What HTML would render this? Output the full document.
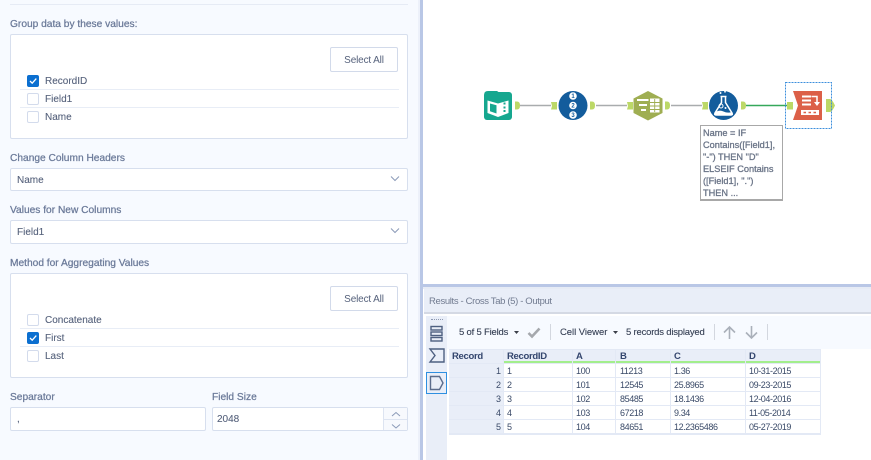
<!DOCTYPE html>
<html><head><meta charset="utf-8"><style>
html,body{margin:0;padding:0}
body{width:871px;height:460px;overflow:hidden;position:relative;background:#fff;font-family:"Liberation Sans",sans-serif}
.a{position:absolute}
.t{position:absolute;white-space:nowrap;line-height:14px;height:14px;margin-top:1px}
.lb{font-size:10.2px;color:#6b7a99;-webkit-text-stroke:.25px #6b7a99}
.tx{font-size:10px;color:#56627c;-webkit-text-stroke:.1px #56627c}
.box{position:absolute;box-sizing:border-box;background:#fff;border:1px solid #d7dfee;border-radius:2px}
.btn{position:absolute;box-sizing:border-box;background:#fff;border:1px solid #d2daea;border-radius:2px;width:68px;height:25px;font-size:10px;letter-spacing:-.15px;color:#56627c;text-align:center;line-height:25px}
.cb{position:absolute;box-sizing:border-box;width:12px;height:12px;border:1px solid #d3dbec;border-radius:2px;background:#fff}
.cb.on{background:#0b6fd0;border-color:#0b6fd0}
.dv{position:absolute;height:1px;background:#e8edf6}
.tb{font-size:9.5px;letter-spacing:-.2px;color:#333d52;-webkit-text-stroke:.1px #333d52}
.cell{position:absolute;box-sizing:border-box;height:13px;background:#fff;font:9px/15px "Liberation Sans",sans-serif;letter-spacing:-.4px;color:#3a4a68;padding-left:3px;white-space:nowrap;overflow:hidden}
.hd{position:absolute;box-sizing:border-box;height:13px;background:#e9eef8;font:bold 9.5px/14px "Liberation Sans",sans-serif;letter-spacing:-.3px;color:#34466e;padding-left:3px;border-bottom:2px solid #a3ee8c;overflow:hidden}
.rn{position:absolute;box-sizing:border-box;left:449px;width:54px;height:13px;background:#e9eef8;font:9px/15px "Liberation Sans",sans-serif;color:#3a4a68;text-align:right;padding-right:2px;overflow:hidden}
</style></head><body>

<!-- left panel -->
<div class="a" style="left:0;top:0;width:418px;height:460px;background:#f7faff"></div>
<div class="a" style="left:418px;top:0;width:2px;height:460px;background:#edf1fa"></div>
<div class="a" style="left:420px;top:0;width:3px;height:460px;background:#b9c7e6"></div>
<div class="a" style="left:10px;top:4px;width:398px;height:1px;background:#e6ebf5"></div>

<div class="t lb" style="left:10px;top:17px">Group data by these values:</div>
<div class="box" style="left:10px;top:34px;width:398px;height:105px"></div>
<div class="btn" style="left:330px;top:47px">Select All</div>
<div class="cb on" style="left:27px;top:75px"><svg width="10" height="10" style="display:block"><path d="M2 5l2.200 2.200L8.300 2.600" fill="none" stroke="#fff" stroke-width="1.300"/></svg></div>
<div class="t tx" style="left:45px;top:74px">RecordID</div>
<div class="dv" style="left:20px;top:89px;width:379px"></div>
<div class="cb" style="left:27px;top:93px"></div>
<div class="t tx" style="left:45px;top:92px">Field1</div>
<div class="dv" style="left:20px;top:107px;width:379px"></div>
<div class="cb" style="left:27px;top:111px"></div>
<div class="t tx" style="left:45px;top:110px">Name</div>

<div class="t lb" style="left:10px;top:151px">Change Column Headers</div>
<div class="box" style="left:10px;top:168px;width:398px;height:23px"></div>
<div class="t tx" style="left:17px;top:173px">Name</div>
<svg class="a" style="left:390px;top:175px" width="10" height="8"><path d="M1 1.500l4 4 4-4" fill="none" stroke="#8b9ab8" stroke-width="1"/></svg>

<div class="t lb" style="left:10px;top:203px">Values for New Columns</div>
<div class="box" style="left:10px;top:220px;width:398px;height:24px"></div>
<div class="t tx" style="left:17px;top:225px">Field1</div>
<svg class="a" style="left:390px;top:227px" width="10" height="8"><path d="M1 1.500l4 4 4-4" fill="none" stroke="#8b9ab8" stroke-width="1"/></svg>

<div class="t lb" style="left:10px;top:256px">Method for Aggregating Values</div>
<div class="box" style="left:10px;top:273px;width:398px;height:105px"></div>
<div class="btn" style="left:330px;top:286px">Select All</div>
<div class="cb" style="left:27px;top:314px"></div>
<div class="t tx" style="left:45px;top:313px">Concatenate</div>
<div class="dv" style="left:20px;top:328px;width:379px"></div>
<div class="cb on" style="left:27px;top:332px"><svg width="10" height="10" style="display:block"><path d="M2 5l2.200 2.200L8.300 2.600" fill="none" stroke="#fff" stroke-width="1.300"/></svg></div>
<div class="t tx" style="left:45px;top:331px">First</div>
<div class="dv" style="left:20px;top:346px;width:379px"></div>
<div class="cb" style="left:27px;top:350px"></div>
<div class="t tx" style="left:45px;top:349px">Last</div>

<div class="t lb" style="left:10px;top:390px">Separator</div>
<div class="t lb" style="left:212px;top:390px">Field Size</div>
<div class="box" style="left:10px;top:407px;width:196px;height:24px"></div>
<div class="t tx" style="left:17px;top:412px">,</div>
<div class="box" style="left:212px;top:407px;width:196px;height:24px"></div>
<div class="t tx" style="left:217px;top:412px">2048</div>
<div class="a" style="left:383px;top:408px;width:24px;height:22px;box-sizing:border-box;background:#f7f9fd;border-left:1px solid #dde4f1"></div>
<div class="a" style="left:383px;top:419px;width:24px;height:1px;background:#dde4f1"></div>
<svg class="a" style="left:391px;top:411px" width="10" height="7"><path d="M1 5l4-3.500L9 5" fill="none" stroke="#8b9ab8" stroke-width="1"/></svg>
<svg class="a" style="left:391px;top:423px" width="10" height="7"><path d="M1 1.500L5 5l4-3.500" fill="none" stroke="#8b9ab8" stroke-width="1"/></svg>

<!-- workflow canvas -->
<svg class="a" style="left:424px;top:60px" width="447" height="160">
  <!-- connectors -->
  <path d="M96 45.500H127" stroke="#a9acae" stroke-width="1.400"/>
  <path d="M172 45.500H203" stroke="#a9acae" stroke-width="1.400"/>
  <path d="M247 45.500H278" stroke="#a9acae" stroke-width="1.400"/>
  <path d="M322 45.500H363" stroke="#35a85a" stroke-width="1.600"/>
  <!-- anchors -->
  <g fill="#bcd867">
    <path d="M91 41.500h2q3 0 3 4t-3 4h-2z"/>
    <path d="M127 42h6v7.500h-6l1-3.500z"/>
    <path d="M166 41.500h2q3 0 3 4t-3 4h-2z"/>
    <path d="M203 42h6v7.500h-6l1-3.500z"/>
    <path d="M241 41.500h2q3 0 3 4t-3 4h-2z"/>
    <path d="M278 42h6v7.500h-6l1-3.500z"/>
    <path d="M317 41.500h2q3 0 3 4t-3 4h-2z"/>
    <path d="M363 42h6v7.500h-6z"/>
    <path d="M402 39h4q2 0 5 6.500q-3 6.500-5 6.500h-4z"/>
  </g>
  <!-- input tool -->
  <rect x="60" y="32" width="28" height="28" rx="3" fill="#16a78f"/>
  <path d="M60 35q0-4 4-4h9l3 2h-16z" fill="#16a78f"/>
  <path d="M63.500 40.500v12.500l10.500 4 10.500-4V40.500l-10.500 3z" fill="#fff"/>
  <path d="M66 43.500l6.500 1.800v8.200L66 51.200z" fill="#16a78f"/>
  <path d="M79.500 42.500h2v2h-2zM79.500 46.500h2v2h-2zM79.500 50h2v2h-2z" fill="#16a78f"/>
  <!-- record id tool -->
  <circle cx="149" cy="45.500" r="14.500" fill="#135c9c"/>
  <circle cx="149" cy="36" r="3.800" fill="#fff"/><circle cx="149" cy="45.500" r="3.800" fill="#fff"/><circle cx="149" cy="55" r="3.800" fill="#fff"/>
  <g font-family="Liberation Sans,sans-serif" font-size="6" font-weight="bold" fill="#135c9c" text-anchor="middle">
    <text x="149" y="38.200">1</text><text x="149" y="47.700">2</text><text x="149" y="57.200">3</text>
  </g>
  <!-- text to columns hex -->
  <path d="M224 31l14.500 7.500v14.500L224 60.500 209.500 53V38.500z" fill="#9fae52"/>
  <path d="M213 39h11.500v2H213zM215 44h8v2h-8zM217 49h5v2h-5z" fill="#fff"/>
  <rect x="226" y="38.500" width="9.500" height="14" fill="#fff"/>
  <path d="M226 42.500h9.500M226 46h9.500M226 49.500h9.500M230.700 39v13" stroke="#9fae52" stroke-width=".9"/>
  <!-- formula -->
  <circle cx="299.500" cy="45.500" r="14.500" fill="#135c9c"/>
  <path d="M296.500 36.500h6M297.500 37v5.500l-6.500 10.500q-1 2 1.500 2h14q2.500 0 1.500-2l-6.500-10.500V37" fill="none" stroke="#fff" stroke-width="1.500"/>
  <path d="M291.500 52q4-2.500 8-.5t8.500 0.500l1 3h-19z" fill="#fff"/>
  <circle cx="297" cy="46" r="2" fill="none" stroke="#fff" stroke-width="1"/>
  <circle cx="301.500" cy="48" r="1" fill="#fff"/>
  <circle cx="296.500" cy="33" r="1" fill="#fff"/><circle cx="301" cy="31.800" r=".9" fill="#fff"/>
  <!-- cross tab selection -->
  <rect x="361.500" y="22.500" width="46" height="46" fill="none" stroke="#3c8fdc" stroke-width="1" stroke-dasharray="2 1"/>
  <path d="M369 31h29v29h-29l5-14.500z" fill="#dc6048"/>
  <path d="M378 35.500h9v2h-9zM378 39.500h9v2h-9zM378 43.500h9v2h-9zM377 50h18v5h-18z" fill="#fff"/>
  <path d="M379.500 52.500h2.500M384.500 52.500h2.500M389.500 52.500h2.500" stroke="#dc6048" stroke-width="1.500"/>
  <path d="M387.500 36.500h5.500v6" fill="none" stroke="#fff" stroke-width="1.500"/>
  <path d="M390 42h6l-3 4z" fill="#fff"/>
</svg>
<div class="a" style="left:700px;top:125px;width:83px;height:76px;box-sizing:border-box;background:#fff;border:1px solid #a8a8a8;border-bottom-width:2px;padding:1px 0 0 2px;font:9.200px/12px 'Liberation Sans',sans-serif;-webkit-text-stroke:.3px #6a7487;color:#6a7487;white-space:nowrap">Name = IF<br>Contains([Field1],<br>"-") THEN "D"<br>ELSEIF Contains<br>([Field1], ".")<br>THEN ...</div>

<!-- results panel -->
<div class="a" style="left:423px;top:284px;width:448px;height:176px;background:#fff"></div>
<div class="a" style="left:423px;top:284px;width:448px;height:3px;background:#b9c7e6"></div>
<div class="a" style="left:423px;top:287px;width:448px;height:2px;background:#e6ebf5"></div>
<div class="a" style="left:424px;top:289px;width:447px;height:23px;background:#e9eef8;border-bottom:2px solid #d4d9e4;box-sizing:content-box"></div>
<div class="t" style="left:429px;top:294px;font-size:9.500px;letter-spacing:-.35px;color:#717b90">Results - Cross Tab (5) - Output</div>
<div class="a" style="left:426px;top:316px;width:21px;height:144px;background:#e9eef8"></div>
<div class="a" style="left:447px;top:316px;width:424px;height:33px;background:#f7faff"></div>
<div class="a" style="left:431px;top:319px;width:12px;height:1px;border-top:1px dotted #8d98b0"></div>

<svg class="a" style="left:426px;top:320px" width="22" height="80">
  <g fill="none" stroke="#4e6081" stroke-width="1.400">
    <rect x="5" y="6.500" width="11" height="3.500"/><rect x="5" y="12" width="11" height="3.500"/><rect x="5" y="17.500" width="11" height="3.500"/>
    <path d="M4 29h14v13H4l5-6.500z"/>
  </g>
  <rect x="0.500" y="52.500" width="20" height="21" fill="#e9eef8" stroke="#2e8fe0"/>
  <path d="M4.500 56.500h9l3.500 6.500-3.500 6.500h-9z" fill="none" stroke="#5b6c8c" stroke-width="1.400"/>
</svg>

<div class="t tb" style="left:459px;top:325px">5 of 5 Fields</div>
<svg class="a" style="left:514px;top:330px" width="6" height="5"><path d="M0 1h5L2.500 4z" fill="#3b3f49"/></svg>
<svg class="a" style="left:527px;top:326px" width="15" height="13"><path d="M1.500 7l3.500 3.500L12.500 2.500" fill="none" stroke="#a5a8ad" stroke-width="2.600"/></svg>
<div class="a" style="left:550px;top:324px;width:1px;height:16px;background:#d3d7df"></div>
<div class="t tb" style="left:560px;top:325px;letter-spacing:-.05px">Cell Viewer</div>
<svg class="a" style="left:613px;top:330px" width="6" height="5"><path d="M0 1h5L2.500 4z" fill="#3b3f49"/></svg>
<div class="t tb" style="left:626px;top:325px">5 records displayed</div>
<div class="a" style="left:714px;top:324px;width:1px;height:16px;background:#d3d7df"></div>
<svg class="a" style="left:722px;top:325px" width="15" height="15"><path d="M7.500 14V2M2 7.500L7.500 2 13 7.500" fill="none" stroke="#aab0ba" stroke-width="1.600"/></svg>
<svg class="a" style="left:744px;top:325px" width="15" height="15"><path d="M7.500 1v12M2 7.500L7.500 13 13 7.500" fill="none" stroke="#aab0ba" stroke-width="1.600"/></svg>
<div class="a" style="left:767px;top:324px;width:1px;height:16px;background:#d3d7df"></div>

<!-- table -->
<div class="a" style="left:449px;top:349px;width:372px;height:86px;background:#e3e9f5"></div>
<div class="hd" style="left:449px;top:350px;width:54px;border-bottom:0;height:13px">Record</div>
<div class="hd" style="left:504px;top:350px;width:68px">RecordID</div>
<div class="hd" style="left:573px;top:350px;width:42px">A</div>
<div class="hd" style="left:616px;top:350px;width:54px;padding-left:4px">B</div>
<div class="hd" style="left:671px;top:350px;width:74px">C</div>
<div class="hd" style="left:746px;top:350px;width:74px">D</div>

<div class="rn" style="top:364px">1</div><div class="cell" style="left:504px;top:364px;width:68px">1</div><div class="cell" style="left:573px;top:364px;width:42px">100</div><div class="cell" style="left:616px;top:364px;width:54px;padding-left:4px">11213</div><div class="cell" style="left:671px;top:364px;width:74px">1.36</div><div class="cell" style="left:746px;top:364px;width:74px">10-31-2015</div>
<div class="rn" style="top:378px">2</div><div class="cell" style="left:504px;top:378px;width:68px">2</div><div class="cell" style="left:573px;top:378px;width:42px">101</div><div class="cell" style="left:616px;top:378px;width:54px;padding-left:4px">12545</div><div class="cell" style="left:671px;top:378px;width:74px">25.8965</div><div class="cell" style="left:746px;top:378px;width:74px">09-23-2015</div>
<div class="rn" style="top:392px">3</div><div class="cell" style="left:504px;top:392px;width:68px">3</div><div class="cell" style="left:573px;top:392px;width:42px">102</div><div class="cell" style="left:616px;top:392px;width:54px;padding-left:4px">85485</div><div class="cell" style="left:671px;top:392px;width:74px">18.1436</div><div class="cell" style="left:746px;top:392px;width:74px">12-04-2016</div>
<div class="rn" style="top:406px">4</div><div class="cell" style="left:504px;top:406px;width:68px">4</div><div class="cell" style="left:573px;top:406px;width:42px">103</div><div class="cell" style="left:616px;top:406px;width:54px;padding-left:4px">67218</div><div class="cell" style="left:671px;top:406px;width:74px">9.34</div><div class="cell" style="left:746px;top:406px;width:74px">11-05-2014</div>
<div class="rn" style="top:420px">5</div><div class="cell" style="left:504px;top:420px;width:68px">5</div><div class="cell" style="left:573px;top:420px;width:42px">104</div><div class="cell" style="left:616px;top:420px;width:54px;padding-left:4px">84651</div><div class="cell" style="left:671px;top:420px;width:74px">12.2365486</div><div class="cell" style="left:746px;top:420px;width:74px">05-27-2019</div>

</body></html>
